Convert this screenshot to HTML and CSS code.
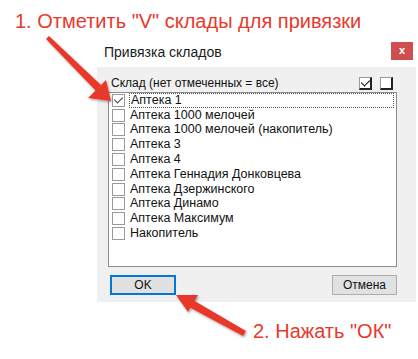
FILE: index.html
```html
<!DOCTYPE html>
<html lang="ru">
<head>
    <meta charset="UTF-8">
    <title>Привязка складов</title>
    <link rel="stylesheet" href="styles.css">
</head>
<body>
    <div class="page">
        <p class="note note-top">1. Отметить "V" склады для привязки</p>

        <div class="window">
            <div class="titlebar">
                <span class="title">Привязка складов</span>
                <span class="close">x</span>
            </div>
            <div class="window-body">
                <div class="list-head">
                    <span class="list-label">Склад (нет отмеченных = все)</span>
                    <span class="head-tools">
                        <span class="tool-box checked"></span>
                        <span class="tool-box"></span>
                    </span>
                </div>
                <div class="list">
                    <div class="row focused"><span class="box checked"></span><span class="row-text">Аптека 1</span></div>
                    <div class="row"><span class="box"></span><span class="row-text">Аптека 1000 мелочей</span></div>
                    <div class="row"><span class="box"></span><span class="row-text">Аптека 1000 мелочей (накопитель)</span></div>
                    <div class="row"><span class="box"></span><span class="row-text">Аптека 3</span></div>
                    <div class="row"><span class="box"></span><span class="row-text">Аптека 4</span></div>
                    <div class="row"><span class="box"></span><span class="row-text">Аптека Геннадия Донковцева</span></div>
                    <div class="row"><span class="box"></span><span class="row-text">Аптека Дзержинского</span></div>
                    <div class="row"><span class="box"></span><span class="row-text">Аптека Динамо</span></div>
                    <div class="row"><span class="box"></span><span class="row-text">Аптека Максимум</span></div>
                    <div class="row"><span class="box"></span><span class="row-text">Накопитель</span></div>
                </div>
                <div class="buttons">
                    <button class="btn btn-default">OK</button>
                    <button class="btn">Отмена</button>
                </div>
            </div>
        </div>

        <p class="note note-bottom">2. Нажать "ОК"</p>

        <!-- стрелки поверх окна -->
        <svg class="arrows" width="418" height="359" viewBox="0 0 418 359">
            <defs>
                <filter id="shadow" x="-20%" y="-20%" width="140%" height="140%">
                    <feDropShadow dx="1" dy="1.5" stdDeviation="1.2" flood-color="#000" flood-opacity="0.35"/>
                </filter>
            </defs>
            <g fill="#e8392c" filter="url(#shadow)">
                <polygon points="46,39 49,36 101,85 96,91"/>
                <polygon points="111,101 88,98 106,80"/>
                <polygon points="246,331 243,336 189,307 193,300"/>
                <polygon points="176,295 198,295 188,312"/>
            </g>
        </svg>
    </div>
</body>
</html>
```

FILE: styles.css
```css
* {
    margin: 0;
    padding: 0;
    box-sizing: border-box;
}

body {
    background: white;
    font-family: 'Liberation Sans', Arial, sans-serif;
}

.page {
    position: relative;
    width: 418px;
    height: 359px;
    overflow: hidden;
}

.note {
    color: #e8392c;
    font-size: 20px;
    line-height: 22px;
    white-space: nowrap;
}

.note-top {
    padding: 10px 0 0 15px;
}

.note-bottom {
    margin-top: 18px;
    padding-left: 253px;
}

.window {
    margin: 8px 0 0 97px;
    width: 319px;
}

.titlebar {
    height: 27px;
    display: flex;
    justify-content: space-between;
    align-items: flex-start;
    background: white;
}

.title {
    padding: 4px 0 0 7px;
    font-size: 14px;
    line-height: 16px;
    color: #1b1b1b;
}

.close {
    margin: 2px 3px 0 0;
    width: 22px;
    height: 18px;
    background: #cf4f4f;
    color: white;
    font-size: 11px;
    font-weight: bold;
    line-height: 17px;
    text-align: center;
}

.window-body {
    height: 235px;
    background: #f0f0f0;
    padding: 10px 19px 7px 11px;
    display: flex;
    flex-direction: column;
}

.list-head {
    height: 15px;
    display: flex;
    justify-content: space-between;
    align-items: flex-start;
    padding: 0 4px 0 3px;
}

.list-label {
    font-size: 12px;
    line-height: 13px;
    color: #111;
}

.head-tools {
    display: flex;
    gap: 8px;
}

.tool-box {
    position: relative;
    width: 13px;
    height: 13px;
    background: white;
    border: 1px solid #9a9a9a;
    border-right: 2px solid #222;
    border-bottom: 2px solid #222;
}

.list {
    height: 175px;
    background: white;
    border: 1px solid #8c8c8c;
    padding: 0 1px;
}

.row {
    height: 14.8px;
    display: flex;
    align-items: center;
    padding-left: 2px;
    font-size: 12.5px;
    color: #111;
}

.box {
    position: relative;
    width: 13px;
    height: 13px;
    flex: none;
    border: 1px solid #9a9a9a;
    background: white;
}

.box.checked::after,
.tool-box.checked::after {
    content: "";
    position: absolute;
    left: 3px;
    top: 0;
    width: 4px;
    height: 7px;
    border: solid #333;
    border-width: 0 1.5px 1.5px 0;
    transform: rotate(45deg);
}

.tool-box.checked::after {
    border-color: #000;
    border-width: 0 1.5px 1.5px 0;
}

.row-text {
    margin-left: 4px;
    padding: 0 1px;
    line-height: 13px;
    white-space: nowrap;
}

.row.focused .row-text {
    flex: 1;
    border: 1px dotted #555;
    margin-right: 1px;
    padding-left: 1px;
}

.buttons {
    margin-top: 8px;
    display: flex;
    justify-content: space-between;
}

.btn {
    height: 20px;
    width: 65px;
    font-family: 'Liberation Sans', Arial, sans-serif;
    font-size: 12px;
    color: #111;
    background: #e1e1e1;
    border: 1px solid #adadad;
}

.btn-default {
    width: 66px;
    margin-left: 2px;
    border: 2px solid #0078d7;
}

.arrows {
    position: absolute;
    left: 0;
    top: 0;
    pointer-events: none;
}
```
